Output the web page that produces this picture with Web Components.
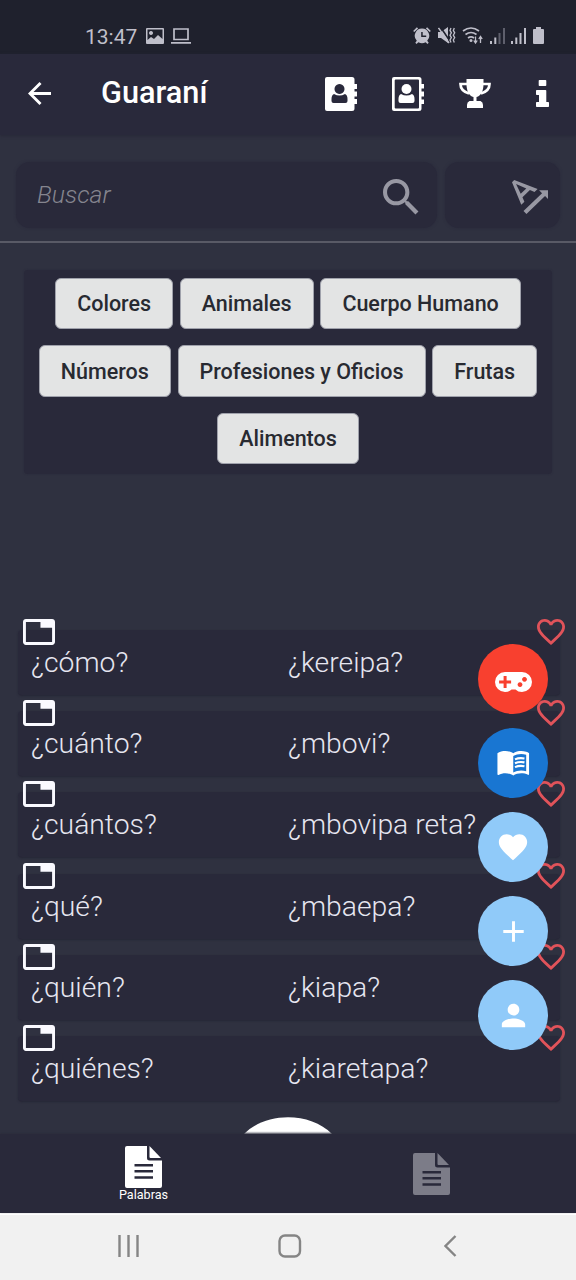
<!DOCTYPE html>
<html lang="es"><head><meta charset="utf-8"><title>Guaraní</title>
<style>html,body{margin:0;background:#2f3140}body{font-family:Roboto,"Noto Sans",sans-serif;width:576px;height:1280px;overflow:hidden}</style>
</head><body><guarani-app></guarani-app>
<script>
const ICONS={
back:['4 4 16 16','<path d="M20 11H7.83l5.59-5.59L12 4l-8 8 8 8 1.41-1.41L7.83 13H20v-2z"/>'],
search:['3 3 17.5 17.5','<path d="M15.5 14h-.79l-.28-.27C15.41 12.59 16 11.11 16 9.5 16 5.91 13.09 3 9.5 3S3 5.91 3 9.5 5.91 16 9.5 16c1.61 0 3.09-.59 4.23-1.57l.27.28v.79l5 4.99L20.49 19l-4.99-5zm-6 0C7.01 14 5 11.99 5 9.5S7.01 5 9.5 5 14 7.01 14 9.5 11.99 14 9.5 14z"/>'],
angle:['3.43 4.21 17.14 16.79','<path d="M4.49 4.21L3.43 5.27 7.85 16.4l1.48-1.48-.92-2.19 3.54-3.54 2.19.92 1.48-1.48L4.49 4.21zm3.09 6.8L5.36 6.14l4.87 2.23-2.65 2.64zm12.99-1.68h-4.24l1.41 1.41-8.84 8.84L10.32 21l8.84-8.84 1.41 1.41V9.33z"/>'],
tab:['1 3 22 18','<path d="M21 3H3c-1.1 0-2 .9-2 2v14c0 1.1.9 2 2 2h18c1.1 0 2-.9 2-2V5c0-1.1-.9-2-2-2zm0 16H3V5h10v4h8v10z"/>'],
heartline:['2 3 20 18.35','<path d="M16.5 3c-1.74 0-3.41.81-4.5 2.09C10.91 3.81 9.24 3 7.5 3 4.42 3 2 5.42 2 8.5c0 3.78 3.4 6.86 8.55 11.54L12 21.35l1.45-1.32C18.6 15.36 22 12.28 22 8.5 22 5.42 19.58 3 16.5 3zm-4.4 15.55l-.1.1-.1-.1C7.14 14.24 4 11.39 4 8.5 4 6.5 5.5 5 7.5 5c1.54 0 3.04.99 3.57 2.36h1.87C13.46 5.99 14.96 5 16.5 5c2 0 3.5 1.5 3.5 3.5 0 2.89-3.14 5.74-7.9 10.05z"/>'],
heart:['0 0 24 24','<path d="M12 21.35l-1.45-1.32C5.4 15.36 2 12.28 2 8.5 2 5.42 4.42 3 7.5 3c1.74 0 3.41.81 4.5 2.09C13.09 3.81 14.76 3 16.5 3 19.58 3 22 5.42 22 8.5c0 3.78-3.4 6.86-8.55 11.54L12 21.35z"/>'],
book:['0 1 24 24','<path d="M21 5c-1.11-.35-2.33-.5-3.5-.5-1.95 0-4.05.4-5.5 1.5-1.45-1.1-3.55-1.5-5.5-1.5S2.45 4.9 1 6v14.65c0 .25.25.5.5.5.1 0 .15-.05.25-.05C3.1 20.45 5.05 20 6.5 20c1.95 0 4.05.4 5.5 1.5 1.35-.85 3.8-1.5 5.5-1.5 1.65 0 3.35.3 4.75 1.05.1.05.15.05.25.05.25 0 .5-.25.5-.5V6c-.6-.45-1.25-.75-2-1zm0 13.5c-1.1-.35-2.3-.5-3.5-.5-1.7 0-4.15.65-5.5 1.5V8c1.35-.85 3.8-1.5 5.5-1.5 1.2 0 2.4.15 3.5.5v11.5z"/><path d="M13.2 10.3q3-1.3 6.6-.6M13.2 13q3-1.3 6.6-.6M13.2 15.700q3-1.3 6.600-.6" fill="none" stroke="currentColor" stroke-width="1.5"/>'],
add:['0 0 24 24','<path d="M19 13h-6v6h-2v-6H5v-2h6V5h2v6h6v2z"/>'],
person:['0 0 24 24','<path d="M12 12c2.210 0 4-1.790 4-4s-1.790-4-4-4-4 1.790-4 4 1.790 4 4 4zm0 2c-2.670 0-8 1.340-8 4v2h16v-2c0-2.660-5.330-4-8-4z"/>'],
game:['0 0 37 20','<path fill-rule="evenodd" d="M10 0h17a10 10 0 0 1 0 20q-4 0-6.500-2.500h-4Q14 20 10 20A10 10 0 0 1 10 0zM8.600 4v4.500H4.100v3h4.500V16h3v-4.500h4.500v-3h-4.500V4zM29.500 5a2.400 2.400 0 1 0 .01 0zM25 10.200a2.400 2.400 0 1 0 .01 0z"/>'],
contact:['0 0 32 34','<path fill-rule="evenodd" d="M2 0h25q2.500 0 2.500 2.500V7H32v5h-2.500v2.500H32v5h-2.500V22H32v5h-2.500v4.500q0 2.500-2.500 2.500H2q-2 0-2-2V2q0-2 2-2zM14.500 7a5 5 0 1 0 .01 0zM9 17q-2.500 1-2.500 5v2q0 2 2 2h12q2 0 2-2v-2q0-4-2.500-5-5.500 3-11 0z"/>'],
contactline:['0 0 32 34','<path fill-rule="evenodd" d="M2 0h25q2.500 0 2.500 2.500V7H32v4.500h-2.500v3H32v5h-2.500v3H32V27h-2.500v4.500q0 2.500-2.500 2.500H2q-2 0-2-2V2q0-2 2-2zM3.700 2.500q-1 0-1 1v27q0 1 1 1H26q1 0 1-1v-27q0-1-1-1z"/><circle cx="14.500" cy="12" r="5"/><path d="M9 17q5.500 3 11 0 2.500 1 2.500 5v2q0 2-2 2h-12q-2 0-2-2v-2q0-4 2.500-5z"/>'],
trophy:['0 0 32 29','<path d="M7.500 0h17v5c0 7-2.500 12-7 13v4h4q2.500 1 2.500 4v3H8v-3q0-3 2.500-4h4v-4c-4.500-1-7-6-7-13z"/><path d="M8 5H1.500q0 7 8.500 9.500M24 5h6.500q0 7-8.500 9.500" fill="none" stroke="currentColor" stroke-width="2.700"/>'],
info:['0 0 13 27','<path d="M3.500 0h6q.8 0 .8.800v4.400q0 .8-.8.800h-6q-.8 0-.8-.8V.8q0-.8.800-.8zM.8 10h8.700q.8 0 .8.800V22h1.900q.8 0 .8.800v3.400q0 .8-.8.800H.8q-.8 0-.8-.8v-3.400q0-.8.800-.8H3v-7H.8q-.8 0-.8-.8v-3.400Q0 10 .8 10z"/>'],
doc:['0 0 37 42','<path fill-rule="evenodd" d="M2 0h20v12q0 2.500 2.500 2.500H37V40q0 2-2 2H2q-2 0-2-2V2q0-2 2-2zM9.500 18v2.600h18.500V18zM9.500 24v2.600h18.500V24zM9.500 30.200v2.600h18.500v-2.600z"/><path d="M24.500 0L36 12H25.500q-1 0-1-1z"/>'],
image:['0 0 18 16','<path fill-rule="evenodd" d="M1 0h16q1 0 1 1v14q0 1-1 1H1q-1 0-1-1V1q0-1 1-1zM1.500 1.500v10.500L5 9l3 2 4-4 4.500 4V1.500zM5 3a2 2 0 1 0 .01 0z"/>'],
laptop:['0 0 20 16','<path d="M3 1h14v10.500H3zM0 14.800h20" fill="none" stroke="currentColor" stroke-width="1.700"/>'],
alarm:['0 0 18 17','<path fill-rule="evenodd" d="M9 1.500a7.200 7.200 0 0 1 5.200 12.200l1.500 2-1.200 1.200-1.900-1.700a7 7 0 0 1-7.200 0l-1.900 1.700-1.200-1.200 1.500-2A7.200 7.200 0 0 1 9 1.500zM8.200 5v5h5V8.600H9.700V5z"/><path d="M.7 4.500L4.500.8M17.300 4.500L13.500.8" stroke="currentColor" stroke-width="1.700"/>'],
mute:['0 0 18 17','<path d="M0 5h3l7-5v16l-7-5H0z"/><path d="M2.500 0l10 15" stroke="#1f212d" stroke-width="1.600"/><path d="M.5 1l10.500 15" stroke="currentColor" stroke-width="1.500"/><path d="M13 1l-1 2.400 1.400 2.400-1.400 2.400 1.400 2.400-1.400 2.400 1 2.400M16.300 1l-1 2.400 1.400 2.400-1.400 2.400 1.400 2.400-1.400 2.400 1 2.400" fill="none" stroke="currentColor" stroke-width="1.300"/>'],
wifi:['0 0 21 17','<path d="M1 4q8-6 16 0M3.500 7.500q5.500-4 11 0M6 11q3-2.200 6 0" fill="none" stroke="currentColor" stroke-width="1.700"/><circle cx="9" cy="13.500" r="1.500"/><path d="M13.500 9.500v6M11.800 13.500l1.700 2.500 1.700-2.500M18.500 16v-6M16.800 12l1.700-2.500 1.700 2.500" fill="none" stroke="currentColor" stroke-width="1.300"/>'],
signalweak:['0 0 16 17','<path d="M0 14h2v3H0zM4.300 10.500h2V17h-2z"/><path opacity=".4" d="M8.500 6h2v11h-2zM13 1h2v16h-2z"/>'],
signal:['0 0 16 17','<path d="M0 14h2v3H0zM4.300 10.500h2V17h-2zM8.500 6h2v11h-2zM13 1h2v16h-2z"/>'],
battery:['0 0 11 17','<path d="M3 0h5v2h2q1 0 1 1v13q0 1-1 1H1q-1 0-1-1V3q0-1 1-1h2z"/>'],
recents:['0 0 21 22','<path d="M1.500 0v22M10.500 0v22M19.500 0v22" stroke="currentColor" stroke-width="2.400"/>'],
home:['0 0 24 24','<rect x="1.500" y="1.500" width="20.500" height="21" rx="5.500" fill="none" stroke="currentColor" stroke-width="2.400"/>'],
prev:['0 0 13 22','<path d="M11.500 1L1.500 11l10 10" fill="none" stroke="currentColor" stroke-width="2.400"/>'],
dome:['0 0 88 16','<path d="M0 16C22-5 66-5 88 16z"/>']
};
const define=(name,html)=>{const t=document.createElement('template');t.innerHTML=html;
customElements.define(name,class extends HTMLElement{constructor(){super();this.attachShadow({mode:'open'}).append(t.content.cloneNode(true))}})};

customElements.define('g-icon',class extends HTMLElement{connectedCallback(){
if(this.shadowRoot)return;const [box,body]=ICONS[this.getAttribute('name')];
this.attachShadow({mode:'open'}).innerHTML=`<style>:host{display:block;flex:none;width:${this.getAttribute('w')}px;height:${this.getAttribute('h')}px}svg{display:block;width:100%;height:100%;fill:currentColor}</style><svg viewBox="${box}" preserveAspectRatio="none">${body}</svg>`}});

define('status-bar',`<style>:host{display:flex;box-sizing:border-box;height:54px;padding:18px 32px 0 85px;background:#1f212d;color:#bfbfca;align-items:center}
span{font-size:21px;line-height:36px;width:60.500px;white-space:nowrap;padding-top:1px}.r{margin-left:auto;display:flex;align-items:center;margin-bottom:2px}</style>
<span>13:47</span><g-icon name="image" w="18" h="16"></g-icon><g-icon name="laptop" w="20" h="16" style="margin-left:7px"></g-icon>
<div class="r"><g-icon name="alarm" w="18" h="17"></g-icon><g-icon name="mute" w="18" h="17" style="margin-left:7px"></g-icon><g-icon name="wifi" w="21" h="17" style="margin-left:6px"></g-icon><g-icon name="signalweak" w="16" h="17" style="margin-left:7px"></g-icon><g-icon name="signal" w="16" h="17" style="margin-left:5px"></g-icon><g-icon name="battery" w="11" h="17" style="margin-left:6px"></g-icon></div>`);

define('app-bar',`<style>:host{display:flex;box-sizing:border-box;height:81px;padding:0 27px 2px 28px;background:#29293b;color:#fff;align-items:center;box-shadow:0 1px 3px #272837;position:relative}
h1{margin:0 0 1px 50px;font-size:30.700px;font-weight:500;line-height:40px}.r{margin-left:auto;display:flex;align-items:center}</style>
<g-icon name="back" w="23" h="23"></g-icon><h1><slot></slot></h1>
<div class="r"><g-icon name="contact" w="32" h="34"></g-icon><g-icon name="contactline" w="32" h="34" style="margin-left:35px"></g-icon><g-icon name="trophy" w="32" h="29" style="margin-left:35px"></g-icon><g-icon name="info" w="13" h="27" style="margin-left:45px"></g-icon></div>`);

define('search-bar',`<style>:host{display:flex;box-sizing:border-box;height:108px;padding:27px 16px 13px;gap:8px;border-bottom:2px solid #595a66;color:#85858f}
div{background:#29293a;border-radius:14px;display:flex;align-items:center;justify-content:space-between;box-sizing:border-box;height:66px;box-shadow:0 0 3px #29293a}
.q{width:421px;padding:4px 18.500px 0 21px}.s{width:115px;padding-left:67px}i{font-size:24.800px;font-weight:300;line-height:34px;margin-bottom:4px}</style>
<div class="q"><i><slot></slot></i><g-icon name="search" w="35.500" h="35.500" style="color:#9898a3"></g-icon></div><div class="s"><g-icon name="angle" w="36" h="34" style="color:#9898a3;margin-top:3px"></g-icon></div>`);

define('tag-button',`<style>:host{display:block}button{display:block;box-sizing:border-box;height:51.400px;margin:0;padding:0 21px;border:1.500px solid #9fa1ab;border-radius:6px;background:#e3e4e4;color:#282a31;font:500 21.500px/49px Roboto,sans-serif;white-space:nowrap}</style><button><slot></slot></button>`);

define('tag-panel',`<style>:host{display:flex;flex-direction:column;box-sizing:border-box;gap:16px;margin:27px 24px 0;padding:8px 0 10px;height:204px;background:#29293a;border-radius:4px;box-shadow:0 0 2px #29293a}
div{display:flex;justify-content:center;gap:6.700px}</style>
<div><tag-button>Colores</tag-button><tag-button>Animales</tag-button><tag-button>Cuerpo Humano</tag-button></div>
<div><tag-button>Números</tag-button><tag-button>Profesiones y Oficios</tag-button><tag-button>Frutas</tag-button></div>
<div><tag-button>Alimentos</tag-button></div>`);

define('word-row',`<style>:host{display:grid;grid-template-columns:257px 1fr;box-sizing:border-box;height:65px;margin:0 16px 16.200px 18px;padding:16px 0 0 13px;background:#29293a;border-radius:4px;box-shadow:0 1px 2px #252635;position:relative;color:#e6e6f0;font-size:28.300px;line-height:34px;font-weight:300;white-space:nowrap}
.t{position:absolute;left:5px;top:-11px;color:#fafaff}.h{position:absolute;right:-5px;top:-11px;color:#e1535a}</style>
<g-icon class="t" name="tab" w="32" h="26"></g-icon><slot></slot><slot name="translation"></slot><g-icon class="h" name="heartline" w="28" h="26"></g-icon>`);

define('word-list',`<style>:host{display:block;padding-top:156px;height:504px;box-sizing:content-box;position:relative}.d{display:flex;justify-content:center;color:#fff}</style>
<slot></slot><div class="d"><g-icon name="dome" w="88" h="17"></g-icon></div>`);

define('fab-button',`<style>:host{display:flex;width:70px;height:70px;border-radius:50%;align-items:center;justify-content:center;color:#fff;background:var(--fab,#90caf9)}</style><slot></slot>`);
define('fab-stack',`<style>:host{position:absolute;right:28px;top:644.400px;display:flex;flex-direction:column;gap:14px}</style><slot></slot>`);

define('tab-bar',`<style>:host{display:grid;grid-template-columns:1fr 1fr;box-sizing:border-box;height:79px;background:#29293a;position:relative;box-shadow:0 -1px 2px #2b2c3b}
div{display:flex;flex-direction:column;align-items:center;padding:12px 1px 0 0}.i{padding-top:19px;color:#7c7c88}.a{color:#fff}span{font-size:12.600px;line-height:14px}</style>
<div class="a"><g-icon name="doc" w="37" h="42"></g-icon><span>Palabras</span></div><div class="i"><g-icon name="doc" w="37" h="42"></g-icon></div>`);

define('system-nav',`<style>:host{display:flex;box-sizing:border-box;height:68px;border-top:2px solid #fff;background:#f1f1f1;color:#858585;align-items:center;padding:0 119px 4px 118px}</style>
<g-icon name="recents" w="21" h="22"></g-icon><g-icon name="home" w="24" h="24" style="margin:0 auto 0 138.500px"></g-icon><g-icon name="prev" w="13" h="22"></g-icon>`);

define('guarani-app',`<style>:host{display:flex;flex-direction:column;width:576px;height:1280px;position:relative;background:#2f3140;overflow:hidden}:host>*{flex:none}</style>
<status-bar></status-bar><app-bar>Guaraní</app-bar><search-bar>Buscar</search-bar><tag-panel></tag-panel>
<word-list>
<word-row><span>¿cómo?</span><span slot="translation">¿kereipa?</span></word-row>
<word-row><span>¿cuánto?</span><span slot="translation">¿mbovi?</span></word-row>
<word-row><span>¿cuántos?</span><span slot="translation">¿mbovipa reta?</span></word-row>
<word-row><span>¿qué?</span><span slot="translation">¿mbaepa?</span></word-row>
<word-row><span>¿quién?</span><span slot="translation">¿kiapa?</span></word-row>
<word-row><span>¿quiénes?</span><span slot="translation">¿kiaretapa?</span></word-row>
</word-list>
<tab-bar></tab-bar><system-nav></system-nav>
<fab-stack>
<fab-button style="--fab:#f8402f"><g-icon name="game" w="37" h="20" style="margin-top:5px"></g-icon></fab-button>
<fab-button style="--fab:#1976d2"><g-icon name="book" w="34.500" h="34.500"></g-icon></fab-button>
<fab-button><g-icon name="heart" w="34" h="34"></g-icon></fab-button>
<fab-button><g-icon name="add" w="35" h="35"></g-icon></fab-button>
<fab-button><g-icon name="person" w="35" h="35"></g-icon></fab-button>
</fab-stack>`);
</script></body></html>
